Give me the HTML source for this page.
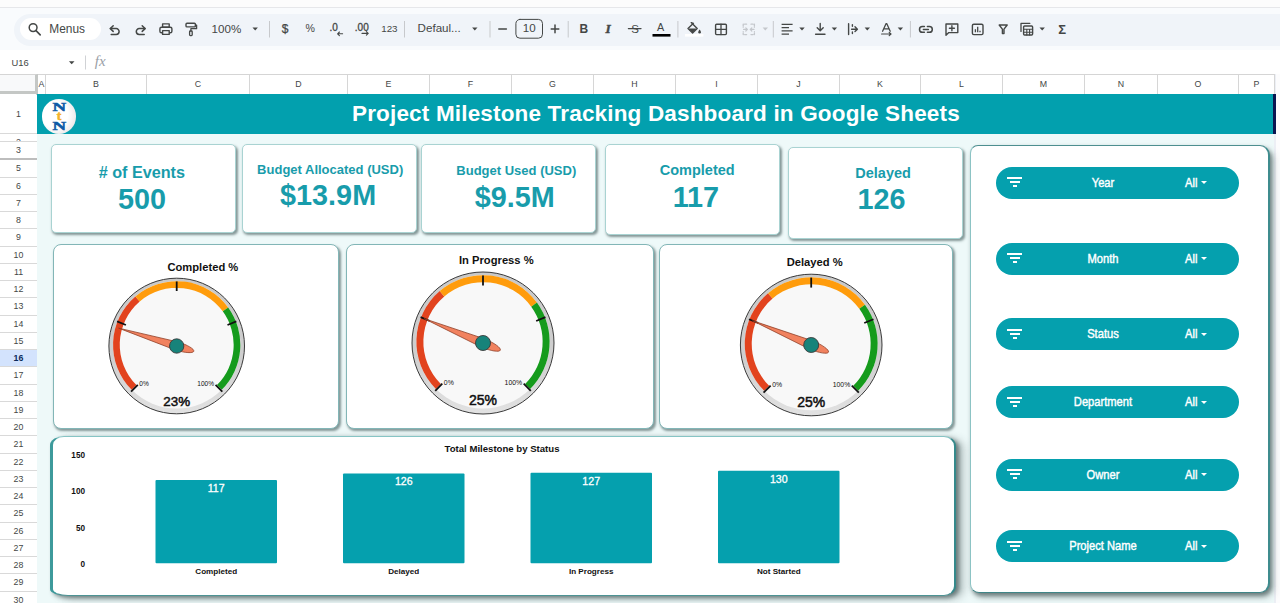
<!DOCTYPE html>
<html lang="en">
<head>
<meta charset="utf-8">
<title>Project Milestone Tracking Dashboard in Google Sheets</title>
<style>
*{box-sizing:border-box;margin:0;padding:0}
html,body{width:1280px;height:603px;overflow:hidden;background:#f9fbfd;font-family:"Liberation Sans",sans-serif;color:#444746}
.abs{position:absolute}
#topstrip{left:0;top:0;width:1280px;height:7.5px;background:#fcfcfc;border-bottom:1.5px solid #e6e7ea}
#toolbar{left:14px;top:14px;width:1290px;height:31.5px;border-radius:16px;background:#f0f4f9}
#menus{left:20px;top:17.500px;width:80.500px;height:22.500px;border-radius:11.500px;background:#fff}
#menus span{position:absolute;left:29px;top:4px;font-size:12.5px;color:#444746;letter-spacing:.1px}
.tb{position:absolute;top:13px;height:32px;line-height:32px;font-size:12.5px;color:#444746;white-space:nowrap}
.sep{position:absolute;top:21px;width:1px;height:16px;background:#c7c7c7}
svg.ic{position:absolute;overflow:visible}
#fbar{left:0;top:50px;width:1280px;height:25px;background:#fff}
#fbar .cell{position:absolute;left:11px;top:6px;font-size:11.5px;color:#202124}
#colhdr{left:0;top:74px;width:1280px;height:20px;background:#fff;border-top:1px solid #d5d5d5}
.ch{position:absolute;top:74px;height:20px;border-right:1px solid #d6d6d6;border-top:1px solid #d5d5d5;font-size:8.8px;line-height:19px;text-align:center;color:#444746;background:#fff}
#corner{left:0;top:74px;width:37.5px;height:19.5px;background:#f8f9fa;border-right:3px solid #c4c7c5;border-bottom:3px solid #c4c7c5;border-top:1px solid #d5d5d5}
#rowhdr{left:0;top:94px;width:37px;height:509px;background:#fff;border-right:1px solid #d0d0d0}
.rh{position:absolute;left:0;width:37px;border-bottom:1px solid #d9d9d9;font-size:8.8px;text-align:center;color:#444746;background:#fff;overflow:hidden}
.rh.sel{background:#d3e3fd;color:#0b2a5c;font-weight:bold}
#sheet{left:37px;top:94px;width:1237px;height:509px;background:#eef9f9}
#rstrip{left:1274px;top:74px;width:6px;height:529px;background:#fcfcfd;border-left:2px solid #eceff5}
#banner{left:37px;top:94px;width:1237px;height:40px;background:#02a0ae}
#navy{left:1273px;top:94px;width:3px;height:40px;background:#0a1550}
#title{left:352px;top:94px;height:40px;line-height:40.6px;font-size:22.5px;font-weight:bold;color:#fff;white-space:nowrap;letter-spacing:.17px}
.card{position:absolute;background:#fff;border:1px solid #a9d3d2;border-radius:5px;box-shadow:1.5px 2px 2.5px rgba(60,85,85,.6)}
.kt{position:absolute;text-align:center;font-weight:bold;color:#189cab;white-space:nowrap}
.gcard{border-radius:8px;border-color:#82b6b7}
.gt{position:absolute;font-weight:bold;font-size:12px;color:#111;white-space:nowrap;transform:translateX(-50%)}
#chartcard{left:50px;top:435.8px;width:906px;height:160.4px;background:#fff;border-radius:14px 12px 12px 18px / 9px 10px 10px 7px;border:1px solid #86c4c4;border-left:3px solid #3d9a9b;border-right:2.5px solid #35898b;border-bottom:1.3px solid #4d9394;box-shadow:3px 2px 4px rgba(50,70,70,.6), 8px 3px 9px rgba(70,90,90,.32)}
#panel{left:970px;top:145px;width:300px;height:447.8px;background:#fff;border:1px solid #8cc3c4;border-top:1.8px solid #4e8f90;border-right:2.2px solid #3f8c8e;border-bottom:1.8px solid #3f8587;border-radius:8px 10px 10px 9px;box-shadow:2px 3px 4px rgba(50,70,70,.6), 4px 5px 7px rgba(60,80,80,.25)}
.pill{position:absolute;left:996.4px;width:242.4px;height:32px;border-radius:16px;background:#05a0ae;color:#fff}
.pill i{position:absolute;background:#fff;display:block}
.pill .f1{left:10.8px;top:10.9px;width:15.2px;height:1.9px}
.pill .f2{left:13.6px;top:14.9px;width:9.6px;height:1.9px}
.pill .f3{left:16.4px;top:18.9px;width:3.8px;height:1.9px}
.pill .pl{position:absolute;left:6.4px;width:200px;top:9px;text-align:center;font-size:12.4px;line-height:14px;transform:scaleX(.9);-webkit-text-stroke:.42px #fff;white-space:nowrap}
.pill .pa{position:absolute;left:189px;top:9px;font-size:12.4px;line-height:14px;transform:scaleX(.9);transform-origin:left center;-webkit-text-stroke:.42px #fff}
.pill .car{left:205px;top:14.7px;width:0;height:0;background:none;border-left:3px solid transparent;border-right:3px solid transparent;border-top:3.2px solid #fff}
#logo{left:41.8px;top:99px;width:34.6px;height:34.6px;border-radius:50%;background:radial-gradient(circle at 38% 45%,#fff 0%,#fff 45%,#ece9ea 75%,#dfe3e6 100%);overflow:hidden}
#logo b{position:absolute;left:0;width:100%;text-align:center;font-family:"Liberation Serif","DejaVu Serif",serif;font-weight:bold;color:#0e5aa6;font-size:13px;line-height:10px;transform:scaleX(1.45);-webkit-text-stroke:.5px #0e5aa6}
#logo i{position:absolute;left:0;width:100%;top:11.6px;text-align:center;font-family:"Liberation Serif",serif;font-style:normal;font-weight:bold;color:#f4b32c;font-size:13.5px;line-height:10px;-webkit-text-stroke:.6px #f4b32c}
</style>
</head>
<body>
<div class="abs" id="topstrip"></div>
<div class="abs" id="toolbar"></div>
<div class="abs" id="menus"></div>
<div class="abs" id="fbar"></div>
<div class="abs" id="colhdr"></div>
<div class="abs" id="rowhdr"></div>
<div class="abs" id="sheet"></div>
<div class="abs" id="rstrip"></div>
<div class="abs" id="banner"></div>
<div class="abs" id="navy"></div>
<div class="abs" id="title">Project Milestone Tracking Dashboard in Google Sheets</div>
<div class="abs" id="logo"><b style="top:3px">N</b><i>t</i><b style="top:22.4px">N</b></div>
<div class="ch" style="left:38px;width:8px">A</div>
<div class="ch" style="left:46px;width:101px">B</div>
<div class="ch" style="left:147px;width:103px">C</div>
<div class="ch" style="left:250px;width:98px">D</div>
<div class="ch" style="left:348px;width:82px">E</div>
<div class="ch" style="left:430px;width:82px">F</div>
<div class="ch" style="left:512px;width:82px">G</div>
<div class="ch" style="left:594px;width:82px">H</div>
<div class="ch" style="left:676px;width:82px">I</div>
<div class="ch" style="left:758px;width:82px">J</div>
<div class="ch" style="left:840px;width:81px">K</div>
<div class="ch" style="left:921px;width:82px">L</div>
<div class="ch" style="left:1003px;width:82px">M</div>
<div class="ch" style="left:1085px;width:73px">N</div>
<div class="ch" style="left:1158px;width:81px">O</div>
<div class="ch" style="left:1239px;width:36px">P</div>
<div class="rh" style="top:95px;height:39px;line-height:38px">1</div>
<div class="rh" style="top:134px;height:8px;line-height:17px">2</div>
<div class="rh" style="top:142px;height:18px;line-height:17px;border-bottom:2px solid #bdbdbd">3</div>
<div class="rh" style="top:160px;height:18px;line-height:17px">5</div>
<div class="rh" style="top:178px;height:17px;line-height:16px">6</div>
<div class="rh" style="top:195px;height:17px;line-height:16px">7</div>
<div class="rh" style="top:212px;height:17px;line-height:16px">8</div>
<div class="rh" style="top:229px;height:18px;line-height:17px">9</div>
<div class="rh" style="top:247px;height:17px;line-height:16px">10</div>
<div class="rh" style="top:264px;height:17px;line-height:16px">11</div>
<div class="rh" style="top:281px;height:17px;line-height:16px">12</div>
<div class="rh" style="top:298px;height:18px;line-height:17px">13</div>
<div class="rh" style="top:316px;height:17px;line-height:16px">14</div>
<div class="rh" style="top:333px;height:17px;line-height:16px">15</div>
<div class="rh sel" style="top:350px;height:17px;line-height:16px">16</div>
<div class="rh" style="top:367px;height:18px;line-height:17px">17</div>
<div class="rh" style="top:385px;height:17px;line-height:16px">18</div>
<div class="rh" style="top:402px;height:17px;line-height:16px">19</div>
<div class="rh" style="top:419px;height:17px;line-height:16px">20</div>
<div class="rh" style="top:436px;height:18px;line-height:17px">21</div>
<div class="rh" style="top:454px;height:17px;line-height:16px">22</div>
<div class="rh" style="top:471px;height:17px;line-height:16px">23</div>
<div class="rh" style="top:488px;height:17px;line-height:16px">24</div>
<div class="rh" style="top:505px;height:18px;line-height:17px">25</div>
<div class="rh" style="top:523px;height:17px;line-height:16px">26</div>
<div class="rh" style="top:540px;height:17px;line-height:16px">27</div>
<div class="rh" style="top:557px;height:17px;line-height:16px">28</div>
<div class="rh" style="top:574px;height:18px;line-height:17px">29</div>
<div class="rh" style="top:592px;height:17px;line-height:16px">30</div>
<div class="abs" id="corner"></div>
<svg class="abs" style="left:0;top:0" width="1280" height="75" viewBox="0 0 1280 75" font-family="Liberation Sans, sans-serif" fill="none" stroke-linecap="round" stroke-linejoin="round">
<circle cx="33.1" cy="27.6" r="3.9" stroke="#444746" stroke-width="1.5"/><path d="M36 30.6l4.2 4.3" stroke="#444746" stroke-width="1.6"/>
<path d="M110.4 28.6h5.8a2.9 2.9 0 0 1 0 5.800h-5" stroke="#444746" stroke-width="1.5"/><path d="M113.200 25.800l-2.900 2.800 2.900 2.800" stroke="#444746" stroke-width="1.5"/>
<path d="M145 28.6h-5.800a2.900 2.900 0 0 0 0 5.800h5" stroke="#444746" stroke-width="1.5"/><path d="M142.200 25.800l2.900 2.800-2.900 2.800" stroke="#444746" stroke-width="1.5"/>
<rect x="162.6" y="23.9" width="6.6" height="3.3" stroke="#444746" stroke-width="1.4"/><rect x="159.9" y="27.2" width="12" height="5.6" rx="1.6" stroke="#444746" stroke-width="1.4"/><rect x="162.6" y="30.6" width="6.6" height="3.8" fill="#f0f4f9" stroke="#444746" stroke-width="1.4"/>
<rect x="186" y="23.3" width="9.4" height="3.6" rx="1" stroke="#444746" stroke-width="1.4"/><path d="M195.4 25.1h1.2v3.6h-5.7v2.2" stroke="#444746" stroke-width="1.3"/><rect x="189.6" y="31" width="2.6" height="4.6" rx=".8" stroke="#444746" stroke-width="1.3"/>
<path d="M252.5 27.4h5.4l-2.7 3z" fill="#444746" stroke="none"/>
<rect x="269.0" y="21" width="1" height="16.5" fill="#c7c9cc" stroke="none"/>
<path d="M337.6 33.8h5M339.4 32l-1.8 1.8 1.8 1.8" stroke="#444746" stroke-width="1.1"/>
<path d="M362 33.4h6.2M366.4 31.6l1.8 1.8-1.8 1.8" stroke="#444746" stroke-width="1.1"/>
<rect x="404.0" y="21" width="1" height="16.5" fill="#c7c9cc" stroke="none"/>
<path d="M472.1 27.4h5.4l-2.7 3z" fill="#444746" stroke="none"/>
<rect x="489.5" y="21" width="1" height="16.5" fill="#c7c9cc" stroke="none"/>
<path d="M498.8 28.9h7.6" stroke="#444746" stroke-width="1.5"/>
<rect x="515.9" y="19.4" width="26.6" height="18.8" rx="4" stroke="#444746" stroke-width="1"/>
<path d="M551.2 28.9h7.6M555 25.1v7.6" stroke="#444746" stroke-width="1.5"/>
<rect x="567.7" y="21" width="1" height="16.5" fill="#c7c9cc" stroke="none"/>
<path d="M628.4 28.6h12.6" stroke="#444746" stroke-width="1.3"/>
<rect x="652.5" y="34" width="18" height="2.6" fill="#000" stroke="none"/>
<rect x="677.4" y="21" width="1" height="16.5" fill="#c7c9cc" stroke="none"/>
<path d="M691.2 22.6l6 6-4.6 4.3-4.6-4.4 5.4-5.2z" stroke="#444746" stroke-width="1.4"/><path d="M688.4 28.6h8.6l-4.4 4.1z" fill="#444746" stroke="none"/><path d="M699.6 29.6c.9 1.3 1.3 2 1.3 2.6a1.3 1.3 0 0 1-2.6 0c0-.6.4-1.300 1.300-2.600z" fill="#444746" stroke="none"/>
<rect x="685" y="34" width="18.400" height="2.600" fill="#fff" stroke="none"/>
<rect x="715.600" y="24.200" width="10.800" height="10.400" rx="1" stroke="#444746" stroke-width="1.4"/><path d="M721 24.200v10.400M715.600 29.400h10.800" stroke="#444746" stroke-width="1.300"/>
<path d="M746.600 24.200h-3.400v3M746.600 34.600h-3.400v-3M751 24.200h3.400v3M751 34.600h3.400v-3" stroke="#c4c7cc" stroke-width="1.300" stroke-dasharray="2 1.200"/><path d="M743.600 29.400h3.600M754 29.400h-3.600M745.800 27.800l1.600 1.600-1.600 1.600M751.800 27.800l-1.600 1.600 1.600 1.600" stroke="#c4c7cc" stroke-width="1.200"/>
<path d="M762.6 27.4h5.4l-2.7 3z" fill="#c4c7cc" stroke="none"/>
<rect x="772.8" y="21" width="1" height="16.5" fill="#c7c9cc" stroke="none"/>
<path d="M781.600 24.300h11M781.600 27.600h7.400M781.600 30.900h11M781.600 34.200h7.400" stroke="#444746" stroke-width="1.300" stroke-linecap="butt"/>
<path d="M799.3 27.4h5.4l-2.7 3z" fill="#444746" stroke="none"/>
<path d="M820.200 23.400v7.200M817.200 27.800l3 3 3-3M815.600 34.200h9.400" stroke="#444746" stroke-width="1.400"/>
<path d="M831.7 27.4h5.4l-2.7 3z" fill="#444746" stroke="none"/>
<path d="M848.600 23.800v10.800M852.400 24.600v1.600M852.400 32v1.600M851.600 29.200h5.400M855 26.800l2.400 2.400-2.400 2.400" stroke="#444746" stroke-width="1.400"/>
<path d="M864.6 27.4h5.4l-2.7 3z" fill="#444746" stroke="none"/>
<path d="M882.600 31.200l3.500-7.600h.6l3.500 7.600M883.800 28.800h5.200" stroke="#444746" stroke-width="1.300"/><path d="M881.600 34h9.400M889.200 32.400l1.800 1.600-1.800 1.600" stroke="#444746" stroke-width="1.200"/>
<path d="M897.7 27.4h5.4l-2.7 3z" fill="#444746" stroke="none"/>
<rect x="909.9" y="21" width="1" height="16.5" fill="#c7c9cc" stroke="none"/>
<path d="M924.400 26.500h-2a2.900 2.900 0 0 0 0 5.800h2M927.400 26.500h2a2.900 2.900 0 0 1 0 5.800h-2M923.400 29.400h5" stroke="#444746" stroke-width="1.500"/>
<path d="M946 24h11.800v8.600h-9l-2.800 2.600z" stroke="#444746" stroke-width="1.400"/><path d="M949.400 28.300h5M951.900 25.800v5" stroke="#444746" stroke-width="1.400"/>
<rect x="972.400" y="24.200" width="10.600" height="10.400" rx="1.400" stroke="#444746" stroke-width="1.400"/><path d="M975.400 32.200v-3M977.700 32.200v-5.400M980 32.200v-1.400" stroke="#444746" stroke-width="1.300" stroke-linecap="butt"/>
<path d="M999.200 25h8l-3.200 4.200v4.400h-1.600v-4.400z" stroke="#444746" stroke-width="1.400"/>
<path d="M1021 31.400v-8h8.800" stroke="#444746" stroke-width="1.300"/><rect x="1023.600" y="26" width="9" height="9" rx="1" stroke="#444746" stroke-width="1.400"/><path d="M1023.600 29.200h9M1026.800 29.200v5.800M1029.600 29.200v5.800M1023.600 32.200h9" stroke="#444746" stroke-width="1.100"/>
<path d="M1039.5 27.4h5.4l-2.7 3z" fill="#444746" stroke="none"/>
<path d="M68.900 61.200h5.600l-2.800 3z" fill="#444746" stroke="none"/>
<rect x="85" y="55.500" width="1" height="14" fill="#d0d2d5" stroke="none"/>
<text x="49.3" y="32.7" font-size="11.9" fill="#444746" stroke="none" >Menus</text>
<text x="211.6" y="32.7" font-size="11.6" fill="#444746" stroke="none" >100%</text>
<text x="281.7" y="32.7" font-size="12" fill="#444746" stroke="none" style="stroke:#444746" stroke-width="0.25">$</text>
<text x="305.6" y="32.3" font-size="10.6" fill="#444746" stroke="none" >%</text>
<text x="329.6" y="31.4" font-size="10" fill="#444746" stroke="none" style="stroke:#444746;stroke-width:0.3">.0</text>
<text x="354.8" y="31.0" font-size="10" fill="#444746" stroke="none" style="stroke:#444746;stroke-width:0.3">.00</text>
<text x="381.2" y="31.8" font-size="9.8" fill="#444746" stroke="none" >123</text>
<text x="417.6" y="32.1" font-size="11.6" fill="#444746" stroke="none" >Defaul...</text>
<text x="529.2" y="32.4" font-size="11.6" fill="#444746" stroke="none" text-anchor="middle">10</text>
<text x="579.6" y="33.3" font-size="12" fill="#444746" stroke="none" font-weight="bold">B</text>
<text x="605.4" y="33.4" font-size="13.4" fill="#444746" stroke="none" font-style="italic" font-weight="bold" font-family="Liberation Serif, serif" style="stroke:#444746;stroke-width:0.4">I</text>
<text x="631.2" y="32.8" font-size="11.5" fill="#444746" stroke="none" >S</text>
<text x="657.1" y="31.4" font-size="10.8" fill="#444746" stroke="none" >A</text>
<text x="1058.2" y="34.2" font-size="13" fill="#444746" stroke="none" font-weight="bold">Σ</text>
<text x="11.6" y="65.7" font-size="9.4" fill="#444746" stroke="none" fill="#202124">U16</text>
<text x="94.800" y="66.000" font-size="15" fill="#9aa0a6" stroke="none" font-style="italic" font-family="Liberation Serif, serif">fx</text>
</svg>
<div class="card" style="left:51px;top:144px;width:185px;height:89px"></div>
<div class="kt" style="left:-8.2px;width:300px;top:164.3px;font-size:16.2px;line-height:16.2px"># of Events</div>
<div class="kt" style="left:-8.0px;width:300px;top:185.0px;font-size:28.8px;line-height:28.8px">500</div>
<div class="card" style="left:242px;top:144px;width:174.5px;height:89px"></div>
<div class="kt" style="left:180.2px;width:300px;top:162.7px;font-size:13px;line-height:13px">Budget Allocated (USD)</div>
<div class="kt" style="left:178.1px;width:300px;top:181.3px;font-size:28.8px;line-height:28.8px">$13.9M</div>
<div class="card" style="left:421px;top:144px;width:174.5px;height:89px"></div>
<div class="kt" style="left:366.3px;width:300px;top:164.0px;font-size:13px;line-height:13px">Budget Used (USD)</div>
<div class="kt" style="left:364.7px;width:300px;top:182.5px;font-size:28.8px;line-height:28.8px">$9.5M</div>
<div class="card" style="left:605px;top:144px;width:174.5px;height:91px"></div>
<div class="kt" style="left:547.2px;width:300px;top:163.4px;font-size:14.5px;line-height:14.5px">Completed</div>
<div class="kt" style="left:545.9px;width:300px;top:183.4px;font-size:28.8px;line-height:28.8px">117</div>
<div class="card" style="left:788px;top:147px;width:174.5px;height:91.5px"></div>
<div class="kt" style="left:733.1px;width:300px;top:165.5px;font-size:14.5px;line-height:14.5px">Delayed</div>
<div class="kt" style="left:731.6px;width:300px;top:185.4px;font-size:28.8px;line-height:28.8px">126</div>
<div class="card gcard" style="left:53px;top:244px;width:286px;height:184.5px"></div>
<div class="card gcard" style="left:346px;top:244px;width:307.5px;height:184.5px"></div>
<div class="card gcard" style="left:658.5px;top:244px;width:294.5px;height:184.5px"></div>
<svg class="abs" style="left:0;top:0" width="1280" height="603" viewBox="0 0 1280 603" font-family="Liberation Sans, sans-serif">
<defs><linearGradient id="bz" x1="0" y1="0" x2="0" y2="1"><stop offset="0" stop-color="#c9c9c9"/><stop offset="0.6" stop-color="#cfcfcf"/><stop offset="1" stop-color="#e2e2e2"/></linearGradient></defs>
<circle cx="176.7" cy="346" r="67.80" fill="url(#bz)" stroke="#3a3a3a" stroke-width="1"/>
<circle cx="176.7" cy="344.84" r="63.66" fill="#f8f8f8"/>
<path d="M131.69 389.85A63.66 63.66 0 0 1 135.36 296.43L139.71 301.52A56.96 56.96 0 0 0 136.42 385.12Z" fill="#e2431e"/>
<path d="M135.36 296.43A63.66 63.66 0 0 1 228.20 307.42L222.78 311.36A56.96 56.96 0 0 0 139.71 301.52Z" fill="#ff9c0c"/>
<path d="M228.20 307.42A63.66 63.66 0 0 1 221.71 389.85L216.98 385.12A56.96 56.96 0 0 0 222.78 311.36Z" fill="#159b1c"/>
<line x1="131.06" y1="391.64" x2="137.82" y2="384.88" stroke="#111" stroke-width="1.8"/>
<line x1="117.07" y1="321.30" x2="125.90" y2="324.96" stroke="#111" stroke-width="1.8"/>
<line x1="176.70" y1="281.46" x2="176.70" y2="291.02" stroke="#111" stroke-width="1.8"/>
<line x1="236.33" y1="321.30" x2="227.50" y2="324.96" stroke="#111" stroke-width="1.8"/>
<line x1="222.34" y1="391.64" x2="215.58" y2="384.88" stroke="#111" stroke-width="1.8"/>
<text x="139.35" y="385.95" font-size="6.56" fill="#111">0%</text>
<text x="214.05" y="385.95" font-size="6.56" fill="#111" text-anchor="end">100%</text>
<text x="176.70" y="405.56" font-size="13.39" fill="#111" text-anchor="middle" stroke="#111" stroke-width="0.5">23%</text>
<path d="M0 -60.79L4.23 0C4.23 9.84 2.33 17.89 0 17.89C-2.33 17.89 -4.23 9.84 -4.23 0Z" transform="translate(176.7 346) rotate(-72.90)" fill="#f1825f" stroke="#8c3a22" stroke-width="0.7" stroke-linejoin="round"/>
<circle cx="176.7" cy="346" r="7.17" fill="#17837a" stroke="#3a3a3a" stroke-width="0.9"/>
<circle cx="483" cy="343" r="71.00" fill="url(#bz)" stroke="#3a3a3a" stroke-width="1"/>
<circle cx="483" cy="341.78" r="66.64" fill="#f8f8f8"/>
<path d="M435.88 388.90A66.64 66.64 0 0 1 439.72 291.11L444.27 296.44A59.63 59.63 0 0 0 440.83 383.95Z" fill="#e2431e"/>
<path d="M439.72 291.11A66.64 66.64 0 0 1 536.91 302.62L531.24 306.73A59.63 59.63 0 0 0 444.27 296.44Z" fill="#ff9c0c"/>
<path d="M536.91 302.62A66.64 66.64 0 0 1 530.12 388.90L525.17 383.95A59.63 59.63 0 0 0 531.24 306.73Z" fill="#159b1c"/>
<line x1="435.22" y1="390.78" x2="442.30" y2="383.70" stroke="#111" stroke-width="1.8"/>
<line x1="420.58" y1="317.14" x2="429.82" y2="320.97" stroke="#111" stroke-width="1.8"/>
<line x1="483.00" y1="275.43" x2="483.00" y2="285.44" stroke="#111" stroke-width="1.8"/>
<line x1="545.42" y1="317.14" x2="536.18" y2="320.97" stroke="#111" stroke-width="1.8"/>
<line x1="530.78" y1="390.78" x2="523.70" y2="383.70" stroke="#111" stroke-width="1.8"/>
<text x="443.86" y="384.74" font-size="6.86" fill="#111">0%</text>
<text x="522.14" y="384.74" font-size="6.86" fill="#111" text-anchor="end">100%</text>
<text x="483.00" y="405.35" font-size="14.01" fill="#111" text-anchor="middle" stroke="#111" stroke-width="0.5">25%</text>
<path d="M0 -63.63L4.43 0C4.43 10.30 2.44 18.73 0 18.73C-2.44 18.73 -4.43 10.30 -4.43 0Z" transform="translate(483 343) rotate(-67.50)" fill="#f1825f" stroke="#8c3a22" stroke-width="0.7" stroke-linejoin="round"/>
<circle cx="483" cy="343" r="7.51" fill="#17837a" stroke="#3a3a3a" stroke-width="0.9"/>
<circle cx="811.2" cy="345" r="70.80" fill="url(#bz)" stroke="#3a3a3a" stroke-width="1"/>
<circle cx="811.2" cy="343.79" r="66.45" fill="#f8f8f8"/>
<path d="M764.21 390.78A66.45 66.45 0 0 1 768.04 293.26L772.58 298.57A59.46 59.46 0 0 0 769.15 385.84Z" fill="#e2431e"/>
<path d="M768.04 293.26A66.45 66.45 0 0 1 864.96 304.73L859.31 308.84A59.46 59.46 0 0 0 772.58 298.57Z" fill="#ff9c0c"/>
<path d="M864.96 304.73A66.45 66.45 0 0 1 858.19 390.78L853.25 385.84A59.46 59.46 0 0 0 859.31 308.84Z" fill="#159b1c"/>
<line x1="763.56" y1="392.64" x2="770.61" y2="385.59" stroke="#111" stroke-width="1.8"/>
<line x1="748.95" y1="319.22" x2="758.17" y2="323.04" stroke="#111" stroke-width="1.8"/>
<line x1="811.20" y1="277.62" x2="811.20" y2="287.60" stroke="#111" stroke-width="1.8"/>
<line x1="873.45" y1="319.22" x2="864.23" y2="323.04" stroke="#111" stroke-width="1.8"/>
<line x1="858.84" y1="392.64" x2="851.79" y2="385.59" stroke="#111" stroke-width="1.8"/>
<text x="772.17" y="386.63" font-size="6.84" fill="#111">0%</text>
<text x="850.23" y="386.63" font-size="6.84" fill="#111" text-anchor="end">100%</text>
<text x="811.20" y="407.17" font-size="13.97" fill="#111" text-anchor="middle" stroke="#111" stroke-width="0.5">25%</text>
<path d="M0 -63.46L4.42 0C4.42 10.27 2.43 18.68 0 18.68C-2.43 18.68 -4.42 10.27 -4.42 0Z" transform="translate(811.2 345) rotate(-67.50)" fill="#f1825f" stroke="#8c3a22" stroke-width="0.7" stroke-linejoin="round"/>
<circle cx="811.2" cy="345" r="7.49" fill="#17837a" stroke="#3a3a3a" stroke-width="0.9"/>
</svg>
<div class="gt" style="left:202.85px;top:261.67px;font-size:11.2px;line-height:11.2px">Completed %</div>
<div class="gt" style="left:496.3px;top:255.02px;font-size:11.2px;line-height:11.2px">In Progress %</div>
<div class="gt" style="left:814.7px;top:256.62px;font-size:11.2px;line-height:11.2px">Delayed %</div>
<div class="abs" id="chartcard"></div>
<svg class="abs" style="left:0;top:0" width="1280" height="603" viewBox="0 0 1280 603" font-family="Liberation Sans, sans-serif">
<rect x="155.5" y="479.90" width="121.5" height="83.30" rx="1" fill="#05a0ae"/>
<text x="216.2" y="491.80" font-size="10.6" fill="#fff" stroke="#fff" stroke-width="0.3" text-anchor="middle">117</text>
<text x="216.2" y="574.4" font-size="8.1" font-weight="bold" fill="#111" text-anchor="middle">Completed</text>
<rect x="343" y="473.49" width="121.5" height="89.71" rx="1" fill="#05a0ae"/>
<text x="403.8" y="485.39" font-size="10.6" fill="#fff" stroke="#fff" stroke-width="0.3" text-anchor="middle">126</text>
<text x="403.8" y="574.4" font-size="8.1" font-weight="bold" fill="#111" text-anchor="middle">Delayed</text>
<rect x="530.5" y="472.78" width="121.5" height="90.42" rx="1" fill="#05a0ae"/>
<text x="591.2" y="484.68" font-size="10.6" fill="#fff" stroke="#fff" stroke-width="0.3" text-anchor="middle">127</text>
<text x="591.2" y="574.4" font-size="8.1" font-weight="bold" fill="#111" text-anchor="middle">In Progress</text>
<rect x="718" y="470.64" width="121.5" height="92.56" rx="1" fill="#05a0ae"/>
<text x="778.8" y="482.54" font-size="10.6" fill="#fff" stroke="#fff" stroke-width="0.3" text-anchor="middle">130</text>
<text x="778.8" y="574.4" font-size="8.1" font-weight="bold" fill="#111" text-anchor="middle">Not Started</text>
<text x="85" y="458.2" font-size="8.2" font-weight="bold" fill="#111" text-anchor="end">150</text>
<text x="85" y="494.2" font-size="8.2" font-weight="bold" fill="#111" text-anchor="end">100</text>
<text x="85" y="530.7" font-size="8.2" font-weight="bold" fill="#111" text-anchor="end">50</text>
<text x="85" y="566.5" font-size="8.2" font-weight="bold" fill="#111" text-anchor="end">0</text>
<text x="502" y="452" font-size="9.6" font-weight="bold" fill="#111" text-anchor="middle">Total Milestone by Status</text>
</svg>
<div class="abs" id="panel"></div>
<div class="pill" style="top:166.5px"><i class="f1"></i><i class="f2"></i><i class="f3"></i><span class="pl">Year</span><span class="pa">All</span><i class="car"></i></div>
<div class="pill" style="top:242.6px"><i class="f1"></i><i class="f2"></i><i class="f3"></i><span class="pl">Month</span><span class="pa">All</span><i class="car"></i></div>
<div class="pill" style="top:317.9px"><i class="f1"></i><i class="f2"></i><i class="f3"></i><span class="pl">Status</span><span class="pa">All</span><i class="car"></i></div>
<div class="pill" style="top:386.0px"><i class="f1"></i><i class="f2"></i><i class="f3"></i><span class="pl">Department</span><span class="pa">All</span><i class="car"></i></div>
<div class="pill" style="top:458.5px"><i class="f1"></i><i class="f2"></i><i class="f3"></i><span class="pl">Owner</span><span class="pa">All</span><i class="car"></i></div>
<div class="pill" style="top:530.2px"><i class="f1"></i><i class="f2"></i><i class="f3"></i><span class="pl">Project Name</span><span class="pa">All</span><i class="car"></i></div>
</body>
</html>
